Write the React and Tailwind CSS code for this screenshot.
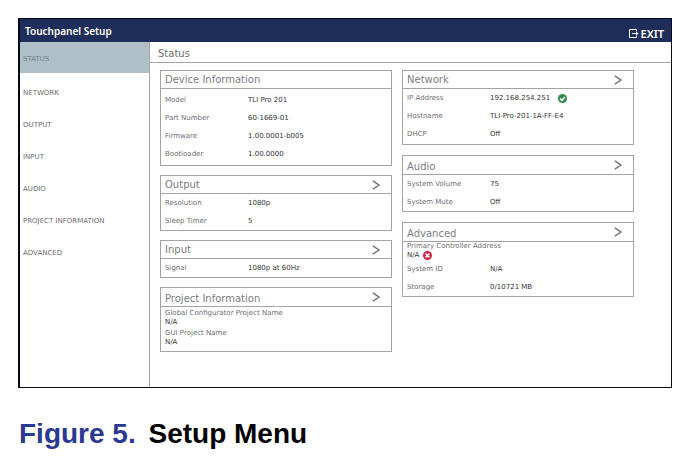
import React from "react";

const NAV = ["NETWORK", "OUTPUT", "INPUT", "AUDIO", "PROJECT INFORMATION", "ADVANCED"];

function Chevron() {
  return (
    <svg viewBox="0 0 8 10" className="h-[10px] w-2" fill="none" stroke="#77787b" strokeWidth="1.5" aria-hidden="true">
      <path d="M0.8 0.8 L7 5 L0.8 9.2" />
    </svg>
  );
}

function CheckBadge() {
  return (
    <svg viewBox="0 0 9 9" className="h-[9px] w-[9px]" aria-label="OK" role="img">
      <circle cx="4.5" cy="4.5" r="4.5" fill="#2d8f49" />
      <path d="M2.2 4.6 L4 6.3 L6.9 3" fill="none" stroke="#fff" strokeWidth="1.5" />
    </svg>
  );
}

function ErrorBadge() {
  return (
    <svg viewBox="0 0 9 9" className="h-[9px] w-[9px]" aria-label="Error" role="img">
      <circle cx="4.5" cy="4.5" r="4.5" fill="#cf2347" />
      <path d="M2.6 2.6 L6.4 6.4 M6.4 2.6 L2.6 6.4" stroke="#fff" strokeWidth="1.5" />
    </svg>
  );
}

function Card({ title, open = true, tall = false, children }) {
  return (
    <section className="border border-[#a3a4a7]">
      <div
        className={`flex items-center justify-between border-b border-[#a3a4a7] pr-[11px] pl-1 ${
          tall ? "h-[19px]" : "h-[18px]"
        }`}
      >
        <h2 className={`text-[10px] text-[#7c7d80] ${tall ? "pt-[2px] leading-[17px]" : "leading-[18px]"}`}>{title}</h2>
        {open && (
          <button type="button" aria-label={`Open ${title}`}>
            <Chevron />
          </button>
        )}
      </div>
      <dl className="px-1 text-[7px]">{children}</dl>
    </section>
  );
}

function Row({ label, value, badge }) {
  return (
    <div className="flex h-[18px] items-center">
      <dt className="w-[83px] shrink-0 text-[#6d6e71]">{label}</dt>
      <dd className="flex items-center gap-2 text-[#333436]">
        {value}
        {badge}
      </dd>
    </div>
  );
}

function Stacked({ label, value, badge }) {
  return (
    <div className="leading-[9px]">
      <dt className="text-[#6d6e71]">{label}</dt>
      <dd className="flex items-center gap-1 text-[#333436]">
        {value}
        {badge}
      </dd>
    </div>
  );
}

export default function App() {
  return (
    <main className="bg-white pt-[18px] pr-[21px] pl-[18px] font-['DejaVu_Sans',sans-serif]">
      <figure>
        <div className="border border-l-2 border-[#05071a] bg-white">
          <header className="flex h-[23px] items-center justify-between bg-[#1f2d5a] pr-[7px] pl-[5px] text-white">
            <h1 className="font-['Noto_Sans',sans-serif] text-[10px] leading-none font-semibold">Touchpanel Setup</h1>
            <button type="button" className="flex items-center gap-[2px] pt-[6px] font-['Noto_Sans',sans-serif] text-[11px] leading-none font-semibold">
              <svg viewBox="0 0 10 9" className="h-[9px] w-[10px]" fill="none" stroke="#fff" strokeWidth="1" aria-hidden="true">
                <path d="M7.5 2.5 V0.5 H0.5 V8.5 H7.5 V6.5 M3 4.5 H8" />
                <path d="M7 2.5 L9.6 4.5 L7 6.5 Z" fill="#fff" stroke="none" />
              </svg>
              EXIT
            </button>
          </header>
          <div className="flex">
            <nav className="w-[130px] shrink-0 border-r border-[#a3a4a7] text-[7px] text-[#6d6e71]">
              <a href="#status" className="flex h-[31px] items-center bg-[#aebfc8] pt-1 pl-[3px] text-[#74828a]">STATUS</a>
              <div className="pt-1">
                {NAV.map((name) => (
                  <a key={name} href={"#" + name.toLowerCase().replace(" ", "-")} className="flex h-8 items-center pl-[3px]">
                    {name}
                  </a>
                ))}
              </div>
            </nav>
            <div className="min-w-0 flex-1">
              <h2 className="h-[21px] border-b border-[#a3a4a7] pl-2 text-[10px] leading-[24px] text-[#6d6e71]">Status</h2>
              <div className="grid grid-cols-2 items-start gap-[10px] pt-[7px] pr-[37px] pb-[35px] pl-[10px]">
                <div className="flex flex-col gap-[9px]">
                  <Card title="Device Information" open={false}>
                    <div className="py-[2px]">
                      <Row label="Model" value="TLI Pro 201" />
                      <Row label="Part Number" value="60-1669-01" />
                      <Row label="Firmware" value="1.00.0001-b005" />
                      <Row label="Bootloader" value="1.00.0000" />
                    </div>
                  </Card>
                  <Card title="Output">
                    <Row label="Resolution" value="1080p" />
                    <Row label="Sleep Timer" value="5" />
                  </Card>
                  <Card title="Input">
                    <Row label="Signal" value="1080p at 60Hz" />
                  </Card>
                  <Card title="Project Information" tall>
                    <div className="flex flex-col gap-[2px] pt-[2px] pb-1">
                      <Stacked label="Global Configurator Project Name" value="N/A" />
                      <Stacked label="GUI Project Name" value="N/A" />
                    </div>
                  </Card>
                </div>
                <div className="flex flex-col gap-[10px]">
                  <Card title="Network">
                    <div className="pb-px">
                      <Row label="IP Address" value="192.168.254.251" badge={<CheckBadge />} />
                      <Row label="Hostname" value="TLI-Pro-201-1A-FF-E4" />
                      <Row label="DHCP" value="Off" />
                    </div>
                  </Card>
                  <Card title="Audio" tall>
                    <Row label="System Volume" value="75" />
                    <Row label="System Mute" value="Off" />
                  </Card>
                  <Card title="Advanced" tall>
                    <Stacked label="Primary Controller Address" value="N/A" badge={<ErrorBadge />} />
                    <Row label="System ID" value="N/A" />
                    <Row label="Storage" value="0/10721 MB" />
                  </Card>
                </div>
              </div>
            </div>
          </div>
        </div>
        <figcaption className="pt-[30px] pl-px font-['Liberation_Sans',Arial,sans-serif] text-[28px] leading-8 font-bold text-black">
          <span className="mr-[5px] text-[#2b3990]">Figure 5.</span> Setup Menu
        </figcaption>
      </figure>
    </main>
  );
}
